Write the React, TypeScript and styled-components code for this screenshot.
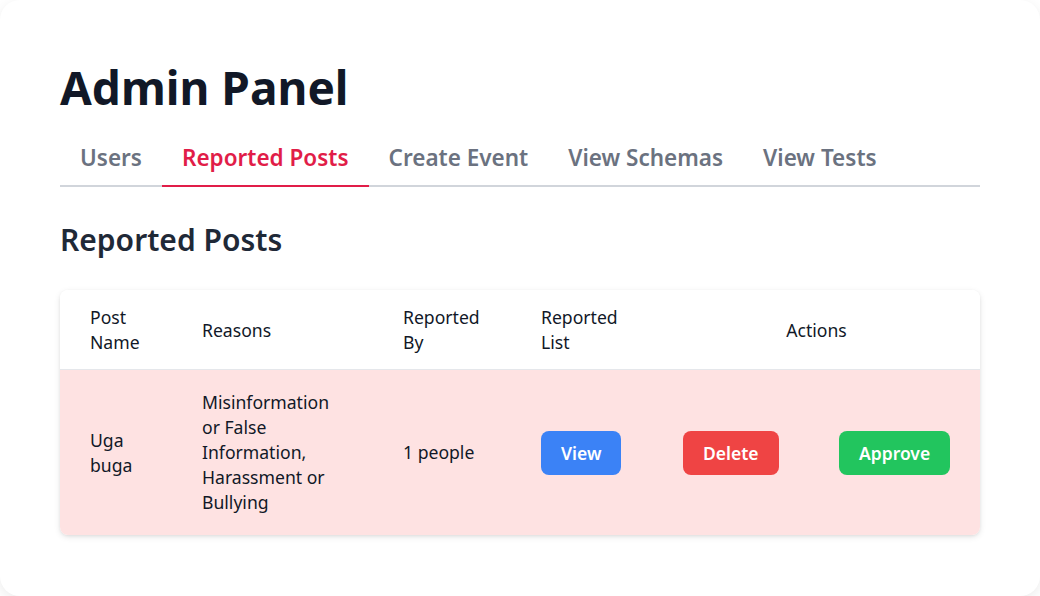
import React from "react";
import styled, { createGlobalStyle } from "styled-components";

const Global = createGlobalStyle`
  html, body { margin: 0; padding: 0; background: #ffffff; }
  body { font-family: "Noto Sans", "Open Sans", sans-serif; }
  * { box-sizing: border-box; }
`;

const Card = styled.div`
  width: 1040px;
  height: 596px;
  background: #ffffff;
  border-radius: 20px;
  box-shadow: 0 4px 14px rgba(0, 0, 0, 0.08);
  padding: 56px 60px 0 60px;
  display: flex;
  flex-direction: column;
  overflow: hidden;
`;

const Title = styled.h1`
  margin: 0;
  font-size: 46px;
  line-height: 62px;
  font-weight: 700;
  color: #111827;
`;

const Tabs = styled.nav`
  display: flex;
  margin-top: 17px;
  border-bottom: 2px solid #d1d5db;
`;

const Tab = styled.button<{ $active?: boolean }>`
  border: none;
  background: none;
  font-family: inherit;
  font-size: 22.5px;
  font-weight: 600;
  line-height: 30px;
  padding: 8px 20px 12px;
  margin-bottom: -2px;
  color: ${(p) => (p.$active ? "#e11d48" : "#6b7280")};
  border-bottom: 2px solid ${(p) => (p.$active ? "#e11d48" : "transparent")};
  cursor: pointer;
`;

const Heading = styled.h2`
  margin: 33px 0 0;
  font-size: 30px;
  line-height: 40px;
  font-weight: 600;
  color: #1f2937;
`;

const Table = styled.div`
  margin-top: 30px;
  border-radius: 8px;
  overflow: hidden;
  box-shadow: 0 2px 6px rgba(0, 0, 0, 0.1), 0 1px 3px rgba(0, 0, 0, 0.06);
  display: grid;
  grid-template-columns: 112px 201px 138px 142px 156px 171px;
  font-size: 17.6px;
  line-height: 25px;
  color: #111827;
`;

const HeadCell = styled.div<{ $span?: number; $center?: boolean }>`
  grid-column: span ${(p) => p.$span ?? 1};
  background: #ffffff;
  padding: 15px 30px 14px;
  border-bottom: 1px solid #e5e7eb;
  display: flex;
  align-items: center;
  justify-content: ${(p) => (p.$center ? "center" : "flex-start")};
  font-weight: 400;
`;

const Cell = styled.div`
  background: #fee2e2;
  padding: 20px 30px;
  display: flex;
  align-items: center;
`;

const ActionButton = styled.button<{ $color: string }>`
  border: none;
  border-radius: 8px;
  background: ${(p) => p.$color};
  color: #ffffff;
  font-family: inherit;
  font-size: 17.5px;
  font-weight: 600;
  line-height: 24px;
  padding: 10px 20px;
  cursor: pointer;
`;

const tabs = ["Users", "Reported Posts", "Create Event", "View Schemas", "View Tests"];

export default function App() {
  return (
    <>
      <Global />
      <Card>
        <Title>Admin Panel</Title>
        <Tabs>
          {tabs.map((t) => (
            <Tab key={t} $active={t === "Reported Posts"}>
              {t}
            </Tab>
          ))}
        </Tabs>
        <Heading>Reported Posts</Heading>
        <Table>
          <HeadCell>Post Name</HeadCell>
          <HeadCell>Reasons</HeadCell>
          <HeadCell>Reported By</HeadCell>
          <HeadCell>Reported List</HeadCell>
          <HeadCell $span={2} $center>
            Actions
          </HeadCell>
          <Cell>Uga buga</Cell>
          <Cell>Misinformation or False Information, Harassment or Bullying</Cell>
          <Cell>1 people</Cell>
          <Cell>
            <ActionButton $color="#3b82f6">View</ActionButton>
          </Cell>
          <Cell>
            <ActionButton $color="#ef4444">Delete</ActionButton>
          </Cell>
          <Cell>
            <ActionButton $color="#22c55e">Approve</ActionButton>
          </Cell>
        </Table>
      </Card>
    </>
  );
}
